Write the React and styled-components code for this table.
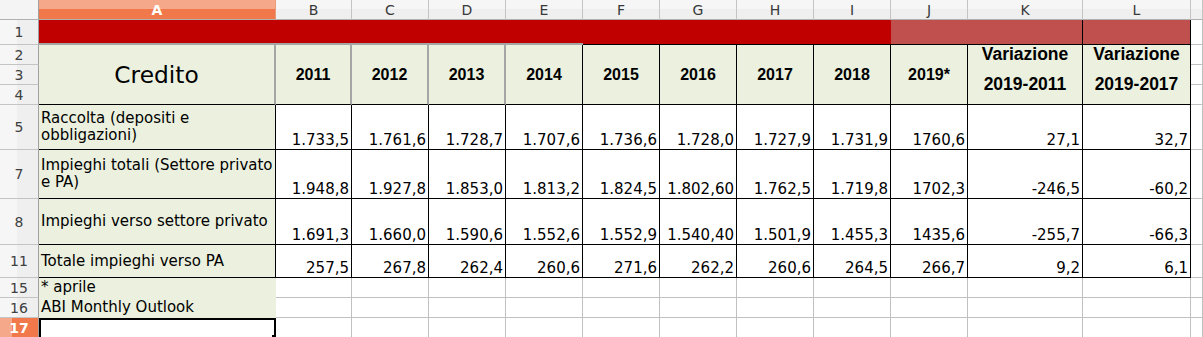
import React from 'react';
import styled, { createGlobalStyle } from 'styled-components';

const GRID = '#c0c0c0';
const BLACK = '#000000';
const GREY = '#a6a6a6';
const GREEN = '#ebf1de';
const RED = '#c00000';
const PINK = '#c0504d';

const GlobalStyle = createGlobalStyle`
  html, body {
    margin: 0;
    padding: 0;
    background: #ffffff;
    overflow: hidden;
  }
  body {
    font-family: "DejaVu Sans", "Liberation Sans", sans-serif;
  }
`;

const Sheet = styled.div`
  display: grid;
  grid-template-columns: 39px 237px 76px repeat(8, 77px) 115px 108px 12px;
  grid-template-rows: 20px 25px 20px 20px 20px 45px 49px 46px 33px 20px 20px 21px;
  width: 1203px;
  height: 337px;
  overflow: hidden;
`;

const Corner = styled.div`
  box-sizing: border-box;
  background: #f4f4f4;
  border-right: 1px solid #a0a0a0;
  border-bottom: 1px solid #b0b0b0;
`;

const ColHead = styled.div`
  box-sizing: border-box;
  display: flex;
  align-items: center;
  justify-content: center;
  padding-top: 1px;
  font-size: 14px;
  color: ${p => (p.$active ? '#ffffff' : '#383838')};
  font-weight: ${p => (p.$active ? 'bold' : 'normal')};
  background: ${p =>
    p.$active
      ? 'linear-gradient(#f5a98a 0 48%, #f0784a 48%)'
      : 'linear-gradient(#f6f6f6 0 48%, #efefef 48%)'};
  border-right: 1px solid ${p => (p.$active ? '#e89a7a' : '#c4c4c4')};
  border-bottom: 1px solid #b0b0b0;
`;

const RowHead = styled.div`
  box-sizing: border-box;
  display: flex;
  align-items: center;
  justify-content: center;
  font-size: 14px;
  color: ${p => (p.$active ? '#ffffff' : '#404040')};
  font-weight: ${p => (p.$active ? 'bold' : 'normal')};
  background: ${p =>
    p.$active
      ? 'linear-gradient(to right, #f5a98a 0 12px, #f0784a 12px)'
      : 'linear-gradient(to right, #f6f6f6 0 17px, #efefef 17px)'};
  border-right: 1px solid #a0a0a0;
  border-bottom: 1px solid #c4c4c4;
`;

const Cell = styled.div`
  box-sizing: border-box;
  position: relative;
  grid-column: span ${p => p.$cols || 1};
  grid-row: span ${p => p.$rows || 1};
  display: flex;
  overflow: hidden;
  background: ${p => p.$bg || '#ffffff'};
  border-right: ${p => p.$rw ?? 1}px solid ${p => p.$rc || GRID};
  border-bottom: ${p => p.$bw ?? 1}px solid ${p => p.$bc || GRID};
  font-size: 15px;
  line-height: 17px;
  color: #000000;
  white-space: nowrap;
`;

const Title = styled(Cell)`
  align-items: center;
  justify-content: center;
  font-size: 23.3px;
  line-height: 28px;
`;

const Year = styled(Cell)`
  align-items: center;
  justify-content: center;
  font-family: "Liberation Sans", Arial, sans-serif;
  font-weight: bold;
  font-size: 16px;
`;

const Variation = styled(Cell)`
  flex-direction: column;
  align-items: center;
  justify-content: center;
  gap: 12px;
  padding-bottom: 11px;
  font-family: "Liberation Sans", Arial, sans-serif;
  font-weight: bold;
  font-size: 17.5px;
  line-height: 18px;
`;

const Label = styled(Cell)`
  flex-direction: column;
  justify-content: center;
  padding-left: 2px;
`;

const Num = styled(Cell)`
  align-items: flex-end;
  justify-content: flex-end;
  padding-right: 2px;
`;

const Note = styled(Cell)`
  align-items: center;
  padding: 0 0 2px 2px;
`;

const Selected = styled(Cell)`
  border: 2px solid #000000;

  &::after {
    content: '';
    position: absolute;
    right: -4px;
    bottom: -4px;
    width: 6px;
    height: 6px;
    background: #000000;
  }
`;

const letters = ['A', 'B', 'C', 'D', 'E', 'F', 'G', 'H', 'I', 'J', 'K', 'L', ''];
const years = ['2011', '2012', '2013', '2014', '2015', '2016', '2017', '2018', '2019*'];

const data = [
  {
    n: 5,
    label: ['Raccolta (depositi e', 'obbligazioni)'],
    values: ['1.733,5', '1.761,6', '1.728,7', '1.707,6', '1.736,6', '1.728,0', '1.727,9', '1.731,9', '1760,6', '27,1', '32,7'],
  },
  {
    n: 7,
    label: ['Impieghi totali (Settore privato', 'e PA)'],
    values: ['1.948,8', '1.927,8', '1.853,0', '1.813,2', '1.824,5', '1.802,60', '1.762,5', '1.719,8', '1702,3', '-246,5', '-60,2'],
  },
  {
    n: 8,
    label: ['Impieghi verso settore privato'],
    values: ['1.691,3', '1.660,0', '1.590,6', '1.552,6', '1.552,9', '1.540,40', '1.501,9', '1.455,3', '1435,6', '-255,7', '-66,3'],
  },
  {
    n: 11,
    label: ['Totale impieghi verso PA'],
    values: ['257,5', '267,8', '262,4', '260,6', '271,6', '262,2', '260,6', '264,5', '266,7', '9,2', '6,1'],
  },
];

const EmptyRow = ({ n }) => (
  <>
    {Array.from({ length: 12 }, (_, i) => (
      <Cell key={`${n}-${i}`} />
    ))}
  </>
);

const App = () => (
  <>
    <GlobalStyle />
    <Sheet>
      <Corner />
      {letters.map((l, i) => (
        <ColHead key={`c${i}`} $active={l === 'A'}>{l}</ColHead>
      ))}

      <RowHead>1</RowHead>
      <Cell $cols={5} $bg={RED} $rw={0} $bw={2} $bc={GREY} />
      <Cell $cols={4} $bg={RED} $rw={0} $bc={BLACK} />
      <Cell $cols={2} $bg={PINK} $rc={BLACK} $bc={BLACK} />
      <Cell $bg={PINK} $rc={BLACK} $bc={BLACK} />
      <Cell />

      <RowHead>2</RowHead>
      <Title $rows={3} $bg={GREEN} $rw={2} $rc={GREY} $bc={BLACK}>Credito</Title>
      {years.map((y, i) => (
        <Year
          key={y}
          $rows={3}
          $bg={GREEN}
          $rw={i < 3 ? 2 : 1}
          $rc={i < 3 ? GREY : BLACK}
          $bc={BLACK}
        >
          {y}
        </Year>
      ))}
      <Variation $rows={3} $bg={GREEN} $rc={BLACK} $bc={BLACK}>
        <span>Variazione</span>
        <span>2019-2011</span>
      </Variation>
      <Variation $rows={3} $bg={GREEN} $rc={BLACK} $bc={BLACK}>
        <span>Variazione</span>
        <span>2019-2017</span>
      </Variation>
      <Cell />
      <RowHead>3</RowHead>
      <Cell />
      <RowHead>4</RowHead>
      <Cell />

      {data.map(row => (
        <React.Fragment key={row.n}>
          <RowHead>{row.n}</RowHead>
          <Label $bg={GREEN} $rc={BLACK} $bc={BLACK}>
            {row.label.map(t => (
              <span key={t}>{t}</span>
            ))}
          </Label>
          {row.values.map((v, i) => (
            <Num key={i} $rc={BLACK} $bc={BLACK}>{v}</Num>
          ))}
          <Cell />
        </React.Fragment>
      ))}

      <RowHead>15</RowHead>
      <Note $bg={GREEN} $rw={0} $bw={0}>* aprile</Note>
      <EmptyRow n={15} />

      <RowHead>16</RowHead>
      <Note $bg={GREEN} $rw={0} $bw={0}>ABI Monthly Outlook</Note>
      <EmptyRow n={16} />

      <RowHead $active>17</RowHead>
      <Selected />
      <EmptyRow n={17} />
    </Sheet>
  </>
);

export default App;
